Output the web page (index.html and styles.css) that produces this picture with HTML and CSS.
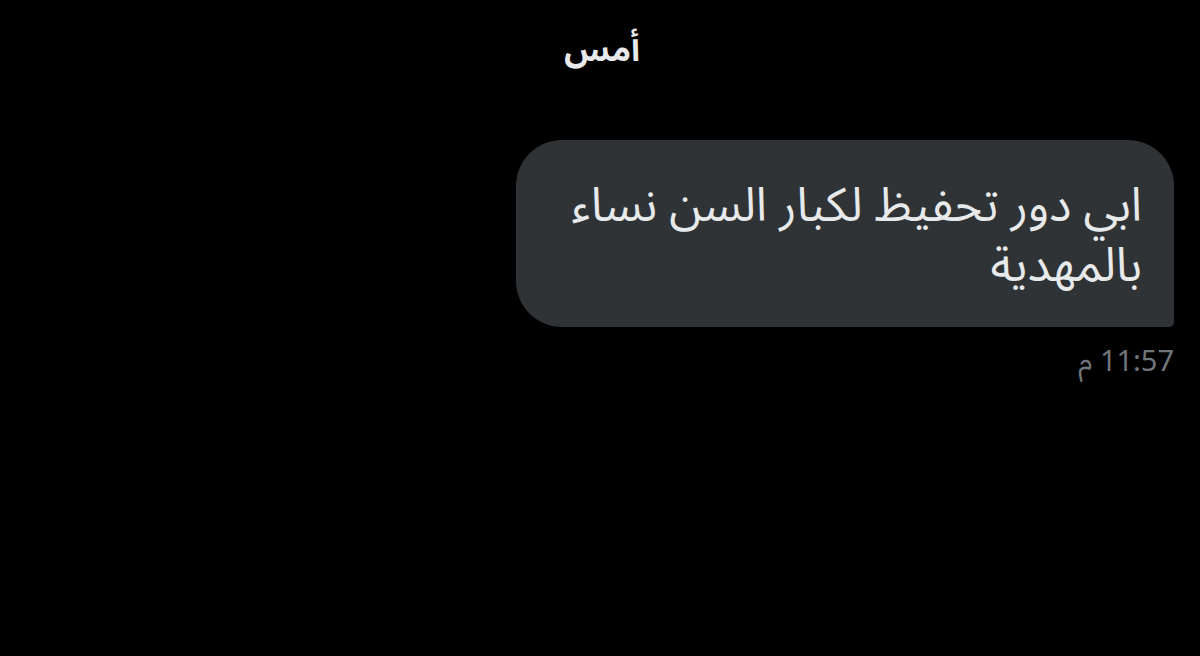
FILE: index.html
```html
<!DOCTYPE html>
<html lang="ar" dir="rtl">
<head>
    <meta charset="UTF-8">
    <meta name="viewport" content="width=device-width, initial-scale=1.0">
    <title>الرسائل</title>
    <link rel="stylesheet" href="styles.css">
</head>
<body>
    <div class="chat">
        <div class="day-label">أمس</div>

        <!-- رسالة مرسلة -->
        <div class="message">
            <div class="bubble">ابي دور تحفيظ لكبار السن نساء بالمهدية</div>
            <div class="time">11:57 م</div>
        </div>
    </div>
</body>
</html>
```

FILE: styles.css
```css
body {
    margin: 0;
    padding: 0;
    background-color: #000;
    font-family: "Noto Sans Arabic", "DejaVu Sans", sans-serif;
    color: #e7e9ea;
    height: 100vh;
    overflow: hidden;
}
.chat {
    display: flex;
    flex-direction: column;
    padding: 0 26px;
}
.day-label {
    align-self: center;
    margin-top: 26px;
    margin-left: 4px;
    font-size: 33px;
    font-weight: bold;
    line-height: 50px;
}
.message {
    display: flex;
    flex-direction: column;
    align-items: flex-start;
    margin-top: 64px;
}
.bubble {
    background-color: #2f3336;
    width: 594px;
    padding: 36px 32px 31px 32px;
    border-radius: 46px 46px 5px 46px;
    font-size: 47px;
    line-height: 60px;
}
.time {
    margin-top: 4px;
    font-size: 29px;
    color: #71767b;
}
```
